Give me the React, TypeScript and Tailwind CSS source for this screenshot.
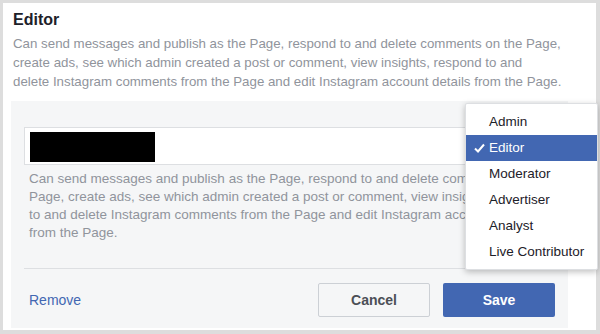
import React from "react";

const roles = ["Admin", "Editor", "Moderator", "Advertiser", "Analyst", "Live Contributor"];

export default function App() {
  const font = { fontFamily: '"Liberation Sans", Arial, sans-serif' };
  return (
    <div className="w-[600px] h-[334px] bg-[#dddddd] pt-[3px] pl-[3px] pr-[4px] pb-[4px] overflow-hidden" style={font}>
      <div className="relative bg-white h-full pl-[8px] pr-[28px]">
        <div className="pl-[2px] pt-[7px]">
          <div className="text-[16px] leading-[20px] font-bold text-[#1d2129]">Editor</div>
          <p className="mt-[4px] whitespace-nowrap text-[13.3px] leading-[19px] text-[#90949c]">
            Can send messages and publish as the Page, respond to and delete comments on the Page,
            <br />
            create ads, see which admin created a post or comment, view insights, respond to and
            <br />
            delete Instagram comments from the Page and edit Instagram account details from the Page.
          </p>
        </div>
        <div className="mt-[10px] bg-[#f5f6f7] px-[13px] pt-[26px] h-[227px]">
          <div className="h-[38px] border border-[#dddfe2] bg-white pl-[5px] pt-[4px]">
            <div className="w-[125px] h-[30px] bg-black" />
          </div>
          <p className="mt-[5px] pl-[5px] pr-[4px] text-[13.5px] leading-[18px] text-[#90949c]">
            Can send messages and publish as the Page, respond to and delete comments on the Page, create ads, see which admin created a post or comment, view insights, respond to and delete Instagram comments from the Page and edit Instagram account details from the Page.
          </p>
          <div className="mt-[26px] border-t border-[#dddfe2]" />
          <div className="flex items-center justify-between pt-[14px]">
            <a className="pl-[5px] text-[14px] text-[#4267b2]">Remove</a>
            <div className="flex gap-[13px]">
              <button className="w-[112px] h-[34px] rounded-[2px] border border-[#ccd0d5] bg-[#f5f6f7] text-[14px] font-bold text-[#4b4f56]">
                Cancel
              </button>
              <button className="w-[112px] h-[34px] rounded-[2px] bg-[#4267b2] text-[14px] font-bold text-white">
                Save
              </button>
            </div>
          </div>
        </div>
        <div className="absolute left-[462px] top-[100px] w-[133px] bg-white border border-[#dddfe2] rounded-[2px] shadow-[0_2px_6px_rgba(0,0,0,0.25)] pt-[5px] pb-[4px]">
          {roles.map((r) => {
            const sel = r === "Editor";
            return (
              <div
                key={r}
                className={
                  sel
                    ? "relative h-[26px] flex items-center pl-[23px] text-[13.5px] bg-[#4267b2] text-white"
                    : "relative h-[26px] flex items-center pl-[23px] text-[13.5px] text-[#1d2129]"
                }
              >
                {sel && (
                  <svg className="absolute left-[8px] top-[8px]" width="11" height="10" viewBox="0 0 11 10">
                    <path d="M1 5.5 L4 8.5 L10 1.5" stroke="white" strokeWidth="2" fill="none" />
                  </svg>
                )}
                {r}
              </div>
            );
          })}
        </div>
      </div>
    </div>
  );
}
